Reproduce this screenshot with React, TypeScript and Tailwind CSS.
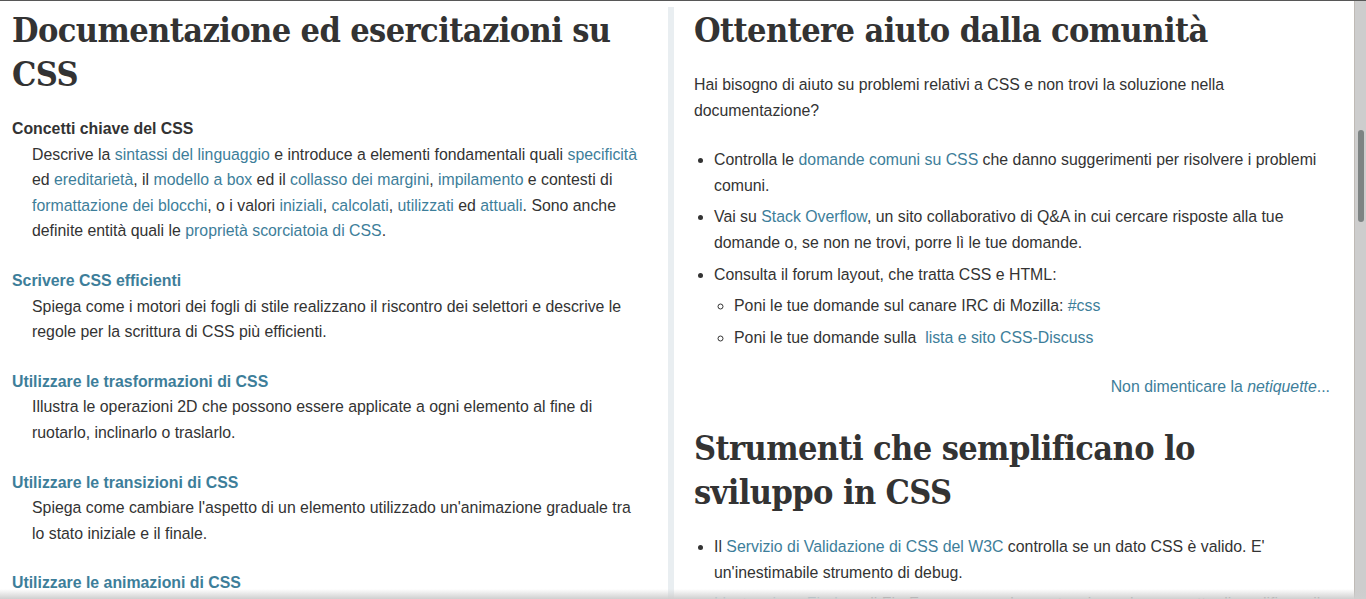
import type { ReactNode } from "react";

const A = ({ children }: { children: ReactNode }) => (
  <a href="#" className="text-[#3d7e9a] no-underline">
    {children}
  </a>
);

const H2 = ({ children, className = "" }: { children: ReactNode; className?: string }) => (
  <h2
    className={
      "font-['DejaVu_Serif','Liberation_Serif',serif] font-bold font-stretch-condensed text-[34px] leading-[44px] tracking-[-0.6px] text-[#333] " +
      className
    }
  >
    {children}
  </h2>
);

const topics = [
  {
    title: "Scrivere CSS efficienti",
    text: "Spiega come i motori dei fogli di stile realizzano il riscontro dei selettori e descrive le regole per la scrittura di CSS più efficienti.",
  },
  {
    title: "Utilizzare le trasformazioni di CSS",
    text: "Illustra le operazioni 2D che possono essere applicate a ogni elemento al fine di ruotarlo, inclinarlo o traslarlo.",
  },
  {
    title: "Utilizzare le transizioni di CSS",
    text: "Spiega come cambiare l'aspetto di un elemento utilizzado un'animazione graduale tra lo stato iniziale e il finale.",
  },
  {
    title: "Utilizzare le animazioni di CSS",
    text: "Spiega come definire le animazioni di CSS.",
  },
];

export default function App() {
  return (
    <div className="relative flex h-[599px] w-[1366px] flex-col overflow-hidden bg-white font-['Liberation_Sans',Arial,sans-serif] text-[15.85px] leading-[25.6px] text-[#333]">
      <div className="h-px shrink-0 bg-[#575757]" />
      <div className="flex min-h-0 flex-1">
        <section className="w-[668px] shrink-0 pl-3 pr-[22px] pt-[7px]">
          <H2 className="mb-5">Documentazione ed esercitazioni su CSS</H2>
          <dl>
            <dt className="font-bold">Concetti chiave del CSS</dt>
            <dd className="mb-6 ml-5">
              Descrive la <A>sintassi del linguaggio</A> e introduce a elementi fondamentali quali{" "}
              <A>specificità</A> ed <A>ereditarietà</A>, il <A>modello a box</A> ed il{" "}
              <A>collasso dei margini</A>, <A>impilamento</A> e contesti di{" "}
              <A>formattazione dei blocchi</A>, o i valori <A>iniziali</A>, <A>calcolati</A>,{" "}
              <A>utilizzati</A> ed <A>attuali</A>. Sono anche definite entità quali le{" "}
              <A>proprietà scorciatoia di CSS</A>.
            </dd>
            {topics.map((t) => (
              <div key={t.title}>
                <dt className="font-bold">
                  <A>{t.title}</A>
                </dt>
                <dd className="mb-6 ml-5">{t.text}</dd>
              </div>
            ))}
          </dl>
        </section>

        <div className="mt-[6px] w-[6px] shrink-0 bg-[#e9eef1]" />

        <section className="min-w-0 flex-1 pl-5 pr-6 pt-[7px]">
          <H2 className="mb-5">Ottentere aiuto dalla comunità</H2>
          <p className="mb-6">
            Hai bisogno di aiuto su problemi relativi a CSS e non trovi la soluzione nella documentazione?
          </p>
          <ul className="mb-6 list-disc pl-5">
            <li className="mb-1.5">
              Controlla le <A>domande comuni su CSS</A> che danno suggerimenti per risolvere i problemi comuni.
            </li>
            <li className="mb-1.5">
              Vai su <A>Stack Overflow</A>, un sito collaborativo di Q&amp;A in cui cercare risposte alla tue
              domande o, se non ne trovi, porre lì le tue domande.
            </li>
            <li className="mb-1.5">
              <span className="mb-1.5 block">Consulta il forum layout, che tratta CSS e HTML:</span>
              <ul className="list-[circle] pl-5">
                <li className="mb-1.5">
                  Poni le tue domande sul canare IRC di Mozilla: <A>#css</A>
                </li>
                <li className="mb-1.5">
                  Poni le tue domande sulla&nbsp; <A>lista e sito CSS-Discuss</A>
                </li>
              </ul>
            </li>
          </ul>
          <p className="mb-[26px] text-right">
            <A>
              Non dimenticare la <em>netiquette</em>...
            </A>
          </p>
          <H2 className="mb-5">Strumenti che semplificano lo sviluppo in CSS</H2>
          <ul className="list-disc pl-5">
            <li className="mb-1.5">
              Il <A>Servizio di Validazione di CSS del W3C</A> controlla se un dato CSS è valido. E'
              un'inestimabile strumento di debug.
            </li>
            <li className="mb-1.5">
              <A>L'estensione Firebug</A> di FireFox, una popolare estensione che permette di modificare il CSS
              in tempo reale.
            </li>
          </ul>
        </section>

        <div className="flex w-[12px] shrink-0 justify-center border-l border-[#bfbab5] bg-[#cdcdcd] pt-[129px]">
          <div className="h-[92px] w-[6px] rounded-full bg-[#7d8383]" />
        </div>
      </div>
      <div className="pointer-events-none absolute inset-x-0 bottom-0 h-[10px] bg-linear-to-b from-transparent to-[#cfcfcf]" />
    </div>
  );
}
